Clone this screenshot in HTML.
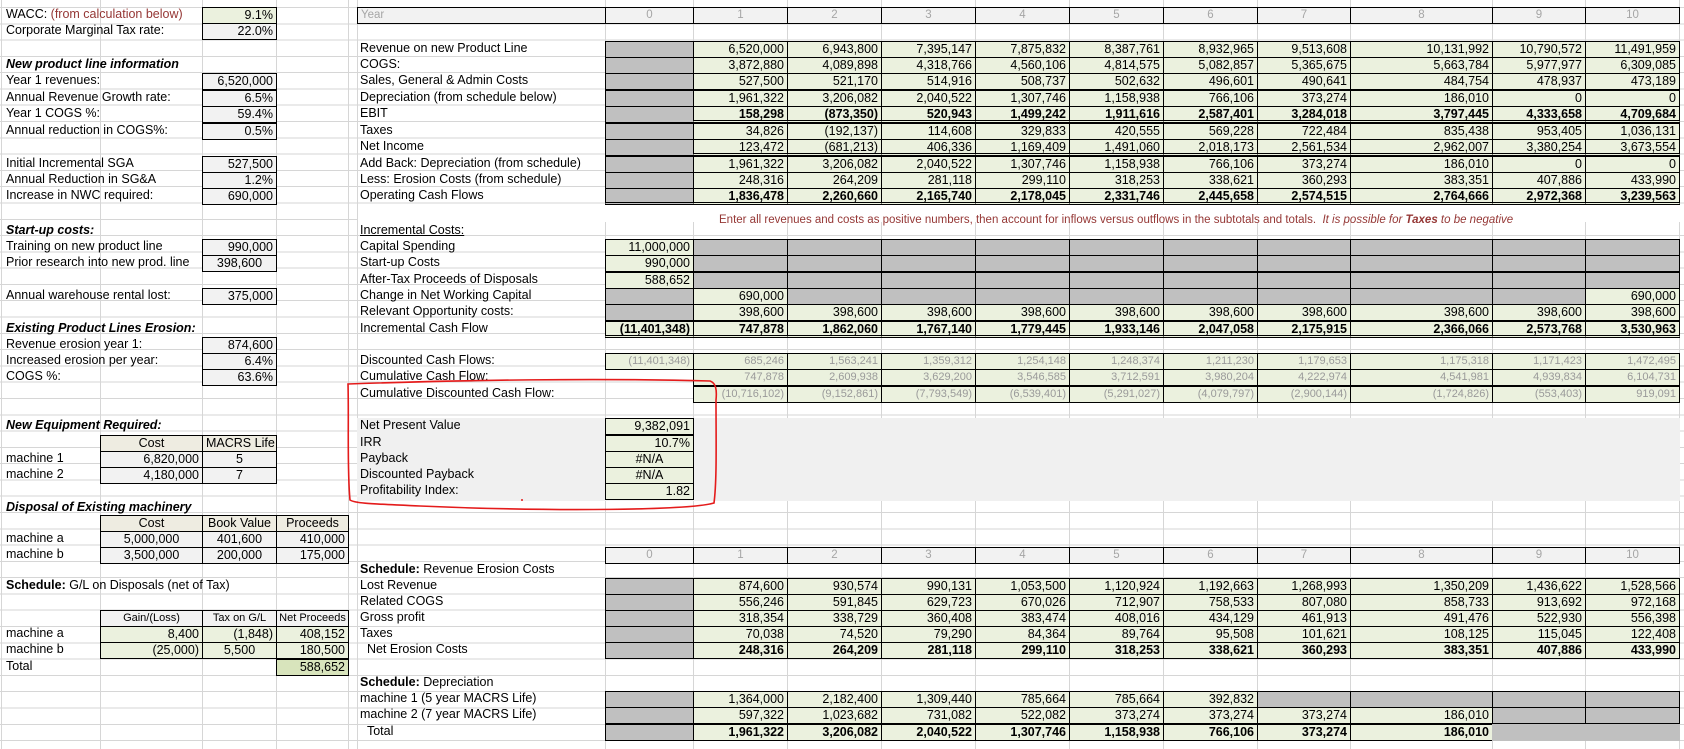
<!DOCTYPE html>
<html><head><meta charset="utf-8">
<style>
body{margin:0;width:1684px;height:749px;position:relative;overflow:hidden;font:12.5px "Liberation Sans",Arial,sans-serif;background:#fff;color:#000}
.grid{position:absolute;left:0;top:7px;width:1684px;height:742px;background-image:repeating-linear-gradient(to bottom,#d6d6d6 0,#d6d6d6 1px,transparent 1px,transparent 16.29px)}
.v{position:absolute;top:0;width:1px;height:749px;background:#d6d6d6}
.row{position:absolute;left:0;width:1684px;height:17px}
.c{position:absolute;top:0;height:17px;box-sizing:border-box;line-height:15px;white-space:nowrap;padding:0 3px}
.b{border:1px solid #000}
.g{background:#c0c0c0}
.gr{background:#ebf1de}
.in{background:#f2f2f2}
.be{background:#eeece1}
.r{text-align:right}
.ct{text-align:center}
.bd{font-weight:bold}
.bi{font-weight:bold;font-style:italic}
.lt{color:#9a9a9a}
.dbl{border-bottom:3px double #000}
.k0{left:605px;width:89px}.k1{left:693px;width:95px}.k2{left:787px;width:95px}.k3{left:881px;width:95px}.k4{left:975px;width:95px}.k5{left:1069px;width:95px}.k6{left:1163px;width:95px}.k7{left:1257px;width:94px}.k8{left:1350px;width:143px}.k9{left:1492px;width:94px}.k10{left:1585px;width:95px}
.lA{left:2px;padding-left:4px}.kB{left:100px;width:103px}.kC{left:202px;width:75px}.kD{left:276px;width:73px}.lE{left:357px}
.hd{background:#f2f2f2;color:#a6a6a6;text-align:center;font-size:11.5px}
</style></head><body>
<div class="grid"></div>
<div class="v" style="left:1px"></div><div class="v" style="left:100px"></div><div class="v" style="left:202px"></div><div class="v" style="left:276px"></div><div class="v" style="left:348px"></div><div class="v" style="left:357px"></div><div class="v" style="left:605px"></div><div class="v" style="left:693px"></div><div class="v" style="left:787px"></div><div class="v" style="left:881px"></div><div class="v" style="left:975px"></div><div class="v" style="left:1069px"></div><div class="v" style="left:1163px"></div><div class="v" style="left:1257px"></div><div class="v" style="left:1350px"></div><div class="v" style="left:1492px"></div><div class="v" style="left:1585px"></div><div class="v" style="left:1679px"></div>
<div style="position:absolute;left:358px;top:204px;width:1326px;height:18px;background:#fff"></div>
<div style="position:absolute;left:357px;top:418px;width:1323px;height:83px;background:#f0f0f0"></div>

<div class="row" style="top:7px">
<div class="c lA">WACC: <span style="color:#953735">(from calculation below)</span></div>
<div class="c kC b r" style="background:#ebf1de">9.1%</div>
<div class="c hd b" style="left:357px;width:249px;text-align:left">Year</div>
<div class="c hd b k0">0</div><div class="c hd b k1">1</div><div class="c hd b k2">2</div><div class="c hd b k3">3</div><div class="c hd b k4">4</div><div class="c hd b k5">5</div><div class="c hd b k6">6</div><div class="c hd b k7">7</div><div class="c hd b k8">8</div><div class="c hd b k9">9</div><div class="c hd b k10">10</div>
</div>
<div class="row" style="top:23px"><div class="c lA">Corporate Marginal Tax rate:</div><div class="c kC b in r">22.0%</div></div>
<div class="row" style="top:41px"><div class="c lE">Revenue on new Product Line</div>
<div class="c k0 b g"></div><div class="c k1 b gr r">6,520,000</div><div class="c k2 b gr r">6,943,800</div><div class="c k3 b gr r">7,395,147</div><div class="c k4 b gr r">7,875,832</div><div class="c k5 b gr r">8,387,761</div><div class="c k6 b gr r">8,932,965</div><div class="c k7 b gr r">9,513,608</div><div class="c k8 b gr r">10,131,992</div><div class="c k9 b gr r">10,790,572</div><div class="c k10 b gr r">11,491,959</div></div>
<div class="row" style="top:57px"><div class="c lA bi">New product line information</div><div class="c lE">COGS:</div>
<div class="c k0 b g"></div><div class="c k1 b gr r">3,872,880</div><div class="c k2 b gr r">4,089,898</div><div class="c k3 b gr r">4,318,766</div><div class="c k4 b gr r">4,560,106</div><div class="c k5 b gr r">4,814,575</div><div class="c k6 b gr r">5,082,857</div><div class="c k7 b gr r">5,365,675</div><div class="c k8 b gr r">5,663,784</div><div class="c k9 b gr r">5,977,977</div><div class="c k10 b gr r">6,309,085</div></div>
<div class="row" style="top:73px"><div class="c lA">Year 1 revenues:</div><div class="c kC b in r">6,520,000</div><div class="c lE">Sales, General &amp; Admin Costs</div>
<div class="c k0 b g"></div><div class="c k1 b gr r">527,500</div><div class="c k2 b gr r">521,170</div><div class="c k3 b gr r">514,916</div><div class="c k4 b gr r">508,737</div><div class="c k5 b gr r">502,632</div><div class="c k6 b gr r">496,601</div><div class="c k7 b gr r">490,641</div><div class="c k8 b gr r">484,754</div><div class="c k9 b gr r">478,937</div><div class="c k10 b gr r">473,189</div></div>
<div class="row" style="top:90px"><div class="c lA">Annual Revenue Growth rate:</div><div class="c kC b in r">6.5%</div><div class="c lE">Depreciation (from schedule below)</div>
<div class="c k0 b g"></div><div class="c k1 b gr r">1,961,322</div><div class="c k2 b gr r">3,206,082</div><div class="c k3 b gr r">2,040,522</div><div class="c k4 b gr r">1,307,746</div><div class="c k5 b gr r">1,158,938</div><div class="c k6 b gr r">766,106</div><div class="c k7 b gr r">373,274</div><div class="c k8 b gr r">186,010</div><div class="c k9 b gr r">0</div><div class="c k10 b gr r">0</div></div>
<div class="row" style="top:106px"><div class="c lA">Year 1 COGS %:</div><div class="c kC b in r">59.4%</div><div class="c lE">EBIT</div>
<div class="c k0 b g"></div><div class="c k1 b gr r bd dbl">158,298</div><div class="c k2 b gr r bd dbl">(873,350)</div><div class="c k3 b gr r bd dbl">520,943</div><div class="c k4 b gr r bd dbl">1,499,242</div><div class="c k5 b gr r bd dbl">1,911,616</div><div class="c k6 b gr r bd dbl">2,587,401</div><div class="c k7 b gr r bd dbl">3,284,018</div><div class="c k8 b gr r bd dbl">3,797,445</div><div class="c k9 b gr r bd dbl">4,333,658</div><div class="c k10 b gr r bd dbl">4,709,684</div></div>
<div class="row" style="top:123px"><div class="c lA">Annual reduction in COGS%:</div><div class="c kC b in r">0.5%</div><div class="c lE">Taxes</div>
<div class="c k0 b g"></div><div class="c k1 b gr r">34,826</div><div class="c k2 b gr r">(192,137)</div><div class="c k3 b gr r">114,608</div><div class="c k4 b gr r">329,833</div><div class="c k5 b gr r">420,555</div><div class="c k6 b gr r">569,228</div><div class="c k7 b gr r">722,484</div><div class="c k8 b gr r">835,438</div><div class="c k9 b gr r">953,405</div><div class="c k10 b gr r">1,036,131</div></div>
<div class="row" style="top:139px"><div class="c lE">Net Income</div>
<div class="c k0 b g"></div><div class="c k1 b gr r dbl">123,472</div><div class="c k2 b gr r dbl">(681,213)</div><div class="c k3 b gr r dbl">406,336</div><div class="c k4 b gr r dbl">1,169,409</div><div class="c k5 b gr r dbl">1,491,060</div><div class="c k6 b gr r dbl">2,018,173</div><div class="c k7 b gr r dbl">2,561,534</div><div class="c k8 b gr r dbl">2,962,007</div><div class="c k9 b gr r dbl">3,380,254</div><div class="c k10 b gr r dbl">3,673,554</div></div>
<div class="row" style="top:156px"><div class="c lA">Initial Incremental SGA</div><div class="c kC b in r">527,500</div><div class="c lE">Add Back: Depreciation (from schedule)</div>
<div class="c k0 b g"></div><div class="c k1 b gr r">1,961,322</div><div class="c k2 b gr r">3,206,082</div><div class="c k3 b gr r">2,040,522</div><div class="c k4 b gr r">1,307,746</div><div class="c k5 b gr r">1,158,938</div><div class="c k6 b gr r">766,106</div><div class="c k7 b gr r">373,274</div><div class="c k8 b gr r">186,010</div><div class="c k9 b gr r">0</div><div class="c k10 b gr r">0</div></div>
<div class="row" style="top:172px"><div class="c lA">Annual Reduction in SG&amp;A</div><div class="c kC b in r">1.2%</div><div class="c lE">Less: Erosion Costs (from schedule)</div>
<div class="c k0 b g"></div><div class="c k1 b gr r">248,316</div><div class="c k2 b gr r">264,209</div><div class="c k3 b gr r">281,118</div><div class="c k4 b gr r">299,110</div><div class="c k5 b gr r">318,253</div><div class="c k6 b gr r">338,621</div><div class="c k7 b gr r">360,293</div><div class="c k8 b gr r">383,351</div><div class="c k9 b gr r">407,886</div><div class="c k10 b gr r">433,990</div></div>
<div class="row" style="top:188px"><div class="c lA">Increase in NWC required:</div><div class="c kC b in r">690,000</div><div class="c lE">Operating Cash Flows</div>
<div class="c k0 b g dbl"></div><div class="c k1 b gr r bd dbl">1,836,478</div><div class="c k2 b gr r bd dbl">2,260,660</div><div class="c k3 b gr r bd dbl">2,165,740</div><div class="c k4 b gr r bd dbl">2,178,045</div><div class="c k5 b gr r bd dbl">2,331,746</div><div class="c k6 b gr r bd dbl">2,445,658</div><div class="c k7 b gr r bd dbl">2,574,515</div><div class="c k8 b gr r bd dbl">2,764,666</div><div class="c k9 b gr r bd dbl">2,972,368</div><div class="c k10 b gr r bd dbl">3,239,563</div></div>
<div class="row" style="top:213px"><div class="c" style="left:716px;color:#953735;font-size:11.5px">Enter all revenues and costs as positive numbers, then account for inflows versus outflows in the subtotals and totals. &nbsp;<i>It is possible for <b>Taxes</b> to be negative</i></div></div>
<div class="row" style="top:223px"><div class="c lA bi">Start-up costs:</div><div class="c lE" style="text-decoration:underline">Incremental Costs:</div></div>
<div class="row" style="top:239px"><div class="c lA">Training on new product line</div><div class="c kC b in r">990,000</div><div class="c lE">Capital Spending</div>
<div class="c k0 b gr r">11,000,000</div><div class="c k1 b g"></div><div class="c k2 b g"></div><div class="c k3 b g"></div><div class="c k4 b g"></div><div class="c k5 b g"></div><div class="c k6 b g"></div><div class="c k7 b g"></div><div class="c k8 b g"></div><div class="c k9 b g"></div><div class="c k10 b g"></div></div>
<div class="row" style="top:255px"><div class="c lA">Prior research into new prod. line</div><div class="c kC b in ct">398,600</div><div class="c lE">Start-up Costs</div>
<div class="c k0 b gr r">990,000</div><div class="c k1 b g"></div><div class="c k2 b g"></div><div class="c k3 b g"></div><div class="c k4 b g"></div><div class="c k5 b g"></div><div class="c k6 b g"></div><div class="c k7 b g"></div><div class="c k8 b g"></div><div class="c k9 b g"></div><div class="c k10 b g"></div></div>
<div class="row" style="top:272px"><div class="c lE">After-Tax Proceeds of Disposals</div>
<div class="c k0 b gr r">588,652</div><div class="c k1 b g"></div><div class="c k2 b g"></div><div class="c k3 b g"></div><div class="c k4 b g"></div><div class="c k5 b g"></div><div class="c k6 b g"></div><div class="c k7 b g"></div><div class="c k8 b g"></div><div class="c k9 b g"></div><div class="c k10 b g"></div></div>
<div class="row" style="top:288px"><div class="c lA">Annual warehouse rental lost:</div><div class="c kC b in r">375,000</div><div class="c lE">Change in Net Working Capital</div>
<div class="c k0 b g"></div><div class="c k1 b gr r">690,000</div><div class="c k2 b g"></div><div class="c k3 b g"></div><div class="c k4 b g"></div><div class="c k5 b g"></div><div class="c k6 b g"></div><div class="c k7 b g"></div><div class="c k8 b g"></div><div class="c k9 b g"></div><div class="c k10 b gr r">690,000</div></div>
<div class="row" style="top:304px"><div class="c lE">Relevant Opportunity costs:</div>
<div class="c k0 b g"></div><div class="c k1 b gr r">398,600</div><div class="c k2 b gr r">398,600</div><div class="c k3 b gr r">398,600</div><div class="c k4 b gr r">398,600</div><div class="c k5 b gr r">398,600</div><div class="c k6 b gr r">398,600</div><div class="c k7 b gr r">398,600</div><div class="c k8 b gr r">398,600</div><div class="c k9 b gr r">398,600</div><div class="c k10 b gr r">398,600</div></div>
<div class="row" style="top:321px"><div class="c lA bi">Existing Product Lines Erosion:</div><div class="c lE">Incremental Cash Flow</div>
<div class="c k0 b gr r bd dbl">(11,401,348)</div><div class="c k1 b gr r bd dbl">747,878</div><div class="c k2 b gr r bd dbl">1,862,060</div><div class="c k3 b gr r bd dbl">1,767,140</div><div class="c k4 b gr r bd dbl">1,779,445</div><div class="c k5 b gr r bd dbl">1,933,146</div><div class="c k6 b gr r bd dbl">2,047,058</div><div class="c k7 b gr r bd dbl">2,175,915</div><div class="c k8 b gr r bd dbl">2,366,066</div><div class="c k9 b gr r bd dbl">2,573,768</div><div class="c k10 b gr r bd dbl">3,530,963</div></div>
<div class="row" style="top:337px"><div class="c lA">Revenue erosion year 1:</div><div class="c kC b in r">874,600</div></div>
<div class="row" style="top:353px;font-size:11px"><div class="c lA" style="font-size:12.5px">Increased erosion per year:</div><div class="c kC b in r" style="font-size:12.5px">6.4%</div><div class="c lE" style="font-size:12.5px">Discounted Cash Flows:</div>
<div class="c k0 b gr r lt">(11,401,348)</div><div class="c k1 b gr r lt">685,246</div><div class="c k2 b gr r lt">1,563,241</div><div class="c k3 b gr r lt">1,359,312</div><div class="c k4 b gr r lt">1,254,148</div><div class="c k5 b gr r lt">1,248,374</div><div class="c k6 b gr r lt">1,211,230</div><div class="c k7 b gr r lt">1,179,653</div><div class="c k8 b gr r lt">1,175,318</div><div class="c k9 b gr r lt">1,171,423</div><div class="c k10 b gr r lt">1,472,495</div></div>
<div class="row" style="top:369px;font-size:11px"><div class="c lA" style="font-size:12.5px">COGS %:</div><div class="c kC b in r" style="font-size:12.5px">63.6%</div><div class="c lE" style="font-size:12.5px">Cumulative Cash Flow:</div>
<div class="c k1 b gr r lt">747,878</div><div class="c k2 b gr r lt">2,609,938</div><div class="c k3 b gr r lt">3,629,200</div><div class="c k4 b gr r lt">3,546,585</div><div class="c k5 b gr r lt">3,712,591</div><div class="c k6 b gr r lt">3,980,204</div><div class="c k7 b gr r lt">4,222,974</div><div class="c k8 b gr r lt">4,541,981</div><div class="c k9 b gr r lt">4,939,834</div><div class="c k10 b gr r lt">6,104,731</div></div>
<div class="row" style="top:386px;font-size:11px"><div class="c lE" style="font-size:12.5px">Cumulative Discounted Cash Flow:</div>
<div class="c k1 b gr r lt">(10,716,102)</div><div class="c k2 b gr r lt">(9,152,861)</div><div class="c k3 b gr r lt">(7,793,549)</div><div class="c k4 b gr r lt">(6,539,401)</div><div class="c k5 b gr r lt">(5,291,027)</div><div class="c k6 b gr r lt">(4,079,797)</div><div class="c k7 b gr r lt">(2,900,144)</div><div class="c k8 b gr r lt">(1,724,826)</div><div class="c k9 b gr r lt">(553,403)</div><div class="c k10 b gr r lt">919,091</div></div>
<div class="row" style="top:418px"><div class="c lA bi">New Equipment Required:</div><div class="c lE">Net Present Value</div><div class="c k0 b gr r">9,382,091</div></div>
<div class="row" style="top:435px"><div class="c kB b be ct">Cost</div><div class="c kC b be ct">MACRS Life</div><div class="c lE">IRR</div><div class="c k0 b gr r">10.7%</div></div>
<div class="row" style="top:451px"><div class="c lA">machine 1</div><div class="c kB b in r">6,820,000</div><div class="c kC b in ct">5</div><div class="c lE">Payback</div><div class="c k0 b gr ct">#N/A</div></div>
<div class="row" style="top:467px"><div class="c lA">machine 2</div><div class="c kB b in r">4,180,000</div><div class="c kC b in ct">7</div><div class="c lE">Discounted Payback</div><div class="c k0 b gr ct">#N/A</div></div>
<div class="row" style="top:483px"><div class="c lE">Profitability Index:</div><div class="c k0 b gr r">1.82</div></div>
<div class="row" style="top:500px"><div class="c lA bi">Disposal of Existing machinery</div></div>
<div class="row" style="top:515px"><div class="c kB b be ct">Cost</div><div class="c kC b be ct">Book Value</div><div class="c kD b be ct">Proceeds</div></div>
<div class="row" style="top:531px"><div class="c lA">machine a</div><div class="c kB b in ct">5,000,000</div><div class="c kC b in ct">401,600</div><div class="c kD b in r">410,000</div></div>
<div class="row" style="top:547px"><div class="c lA">machine b</div><div class="c kB b in ct">3,500,000</div><div class="c kC b in ct">200,000</div><div class="c kD b in r">175,000</div>
<div class="c hd b k0">0</div><div class="c hd b k1">1</div><div class="c hd b k2">2</div><div class="c hd b k3">3</div><div class="c hd b k4">4</div><div class="c hd b k5">5</div><div class="c hd b k6">6</div><div class="c hd b k7">7</div><div class="c hd b k8">8</div><div class="c hd b k9">9</div><div class="c hd b k10">10</div></div>
<div class="row" style="top:562px"><div class="c lE"><b>Schedule:</b> Revenue Erosion Costs</div></div>
<div class="row" style="top:578px"><div class="c lA"><b>Schedule:</b> G/L on Disposals (net of Tax)</div><div class="c lE">Lost Revenue</div>
<div class="c k0 b g"></div><div class="c k1 b gr r">874,600</div><div class="c k2 b gr r">930,574</div><div class="c k3 b gr r">990,131</div><div class="c k4 b gr r">1,053,500</div><div class="c k5 b gr r">1,120,924</div><div class="c k6 b gr r">1,192,663</div><div class="c k7 b gr r">1,268,993</div><div class="c k8 b gr r">1,350,209</div><div class="c k9 b gr r">1,436,622</div><div class="c k10 b gr r">1,528,566</div></div>
<div class="row" style="top:594px"><div class="c lE">Related COGS</div>
<div class="c k0 b g"></div><div class="c k1 b gr r">556,246</div><div class="c k2 b gr r">591,845</div><div class="c k3 b gr r">629,723</div><div class="c k4 b gr r">670,026</div><div class="c k5 b gr r">712,907</div><div class="c k6 b gr r">758,533</div><div class="c k7 b gr r">807,080</div><div class="c k8 b gr r">858,733</div><div class="c k9 b gr r">913,692</div><div class="c k10 b gr r">972,168</div></div>
<div class="row" style="top:610px"><div class="c kB b in ct" style="font-size:11px">Gain/(Loss)</div><div class="c kC b in ct" style="font-size:11px">Tax on G/L</div><div class="c kD b in ct" style="font-size:11px;padding:0">Net Proceeds</div><div class="c lE">Gross profit</div>
<div class="c k0 b g"></div><div class="c k1 b gr r">318,354</div><div class="c k2 b gr r">338,729</div><div class="c k3 b gr r">360,408</div><div class="c k4 b gr r">383,474</div><div class="c k5 b gr r">408,016</div><div class="c k6 b gr r">434,129</div><div class="c k7 b gr r">461,913</div><div class="c k8 b gr r">491,476</div><div class="c k9 b gr r">522,930</div><div class="c k10 b gr r">556,398</div></div>
<div class="row" style="top:626px"><div class="c lA">machine a</div><div class="c kB b gr r">8,400</div><div class="c kC b gr r">(1,848)</div><div class="c kD b gr r">408,152</div><div class="c lE">Taxes</div>
<div class="c k0 b g"></div><div class="c k1 b gr r">70,038</div><div class="c k2 b gr r">74,520</div><div class="c k3 b gr r">79,290</div><div class="c k4 b gr r">84,364</div><div class="c k5 b gr r">89,764</div><div class="c k6 b gr r">95,508</div><div class="c k7 b gr r">101,621</div><div class="c k8 b gr r">108,125</div><div class="c k9 b gr r">115,045</div><div class="c k10 b gr r">122,408</div></div>
<div class="row" style="top:642px"><div class="c lA">machine b</div><div class="c kB b gr r">(25,000)</div><div class="c kC b gr ct">5,500</div><div class="c kD b gr r">180,500</div><div class="c lE">&nbsp;&nbsp;Net Erosion Costs</div>
<div class="c k0 b g"></div><div class="c k1 b gr r bd">248,316</div><div class="c k2 b gr r bd">264,209</div><div class="c k3 b gr r bd">281,118</div><div class="c k4 b gr r bd">299,110</div><div class="c k5 b gr r bd">318,253</div><div class="c k6 b gr r bd">338,621</div><div class="c k7 b gr r bd">360,293</div><div class="c k8 b gr r bd">383,351</div><div class="c k9 b gr r bd">407,886</div><div class="c k10 b gr r bd">433,990</div></div>
<div class="row" style="top:659px"><div class="c lA">Total</div><div class="c kD b r" style="background:#d8e4bc">588,652</div></div>
<div class="row" style="top:675px"><div class="c lE"><b>Schedule:</b> Depreciation</div></div>
<div class="row" style="top:691px"><div class="c lE">machine 1 (5 year MACRS Life)</div>
<div class="c k0 b g"></div><div class="c k1 b gr r">1,364,000</div><div class="c k2 b gr r">2,182,400</div><div class="c k3 b gr r">1,309,440</div><div class="c k4 b gr r">785,664</div><div class="c k5 b gr r">785,664</div><div class="c k6 b gr r">392,832</div><div class="c k7 b g"></div><div class="c k8 b g"></div><div class="c k9 b g"></div><div class="c k10 b g"></div></div>
<div class="row" style="top:707px"><div class="c lE">machine 2 (7 year MACRS Life)</div>
<div class="c k0 b g"></div><div class="c k1 b gr r">597,322</div><div class="c k2 b gr r">1,023,682</div><div class="c k3 b gr r">731,082</div><div class="c k4 b gr r">522,082</div><div class="c k5 b gr r">373,274</div><div class="c k6 b gr r">373,274</div><div class="c k7 b gr r">373,274</div><div class="c k8 b gr r">186,010</div><div class="c k9 b g"></div><div class="c k10 b g"></div></div>
<div class="row" style="top:724px"><div class="c lE">&nbsp;&nbsp;Total</div>
<div class="c k0 b g"></div><div class="c k1 b gr r bd">1,961,322</div><div class="c k2 b gr r bd">3,206,082</div><div class="c k3 b gr r bd">2,040,522</div><div class="c k4 b gr r bd">1,307,746</div><div class="c k5 b gr r bd">1,158,938</div><div class="c k6 b gr r bd">766,106</div><div class="c k7 b gr r bd">373,274</div><div class="c k8 b gr r bd">186,010</div><div class="c k9 g" style="height:17px"></div><div class="c k10 g" style="height:17px"></div></div>

<svg style="position:absolute;left:0;top:0" width="1684" height="749">
<path d="M348,384 C460,380 600,378 710,381 C716,383 717,390 716,400 C716,440 717,480 714,503 C690,510 560,512 420,506 C380,504 356,504 350,500 C347,470 349,420 348,384 Z" fill="none" stroke="#e41b1b" stroke-width="1.6"/>
<circle cx="522" cy="500" r="1" fill="#e41b1b"/>
</svg>
</body></html>
